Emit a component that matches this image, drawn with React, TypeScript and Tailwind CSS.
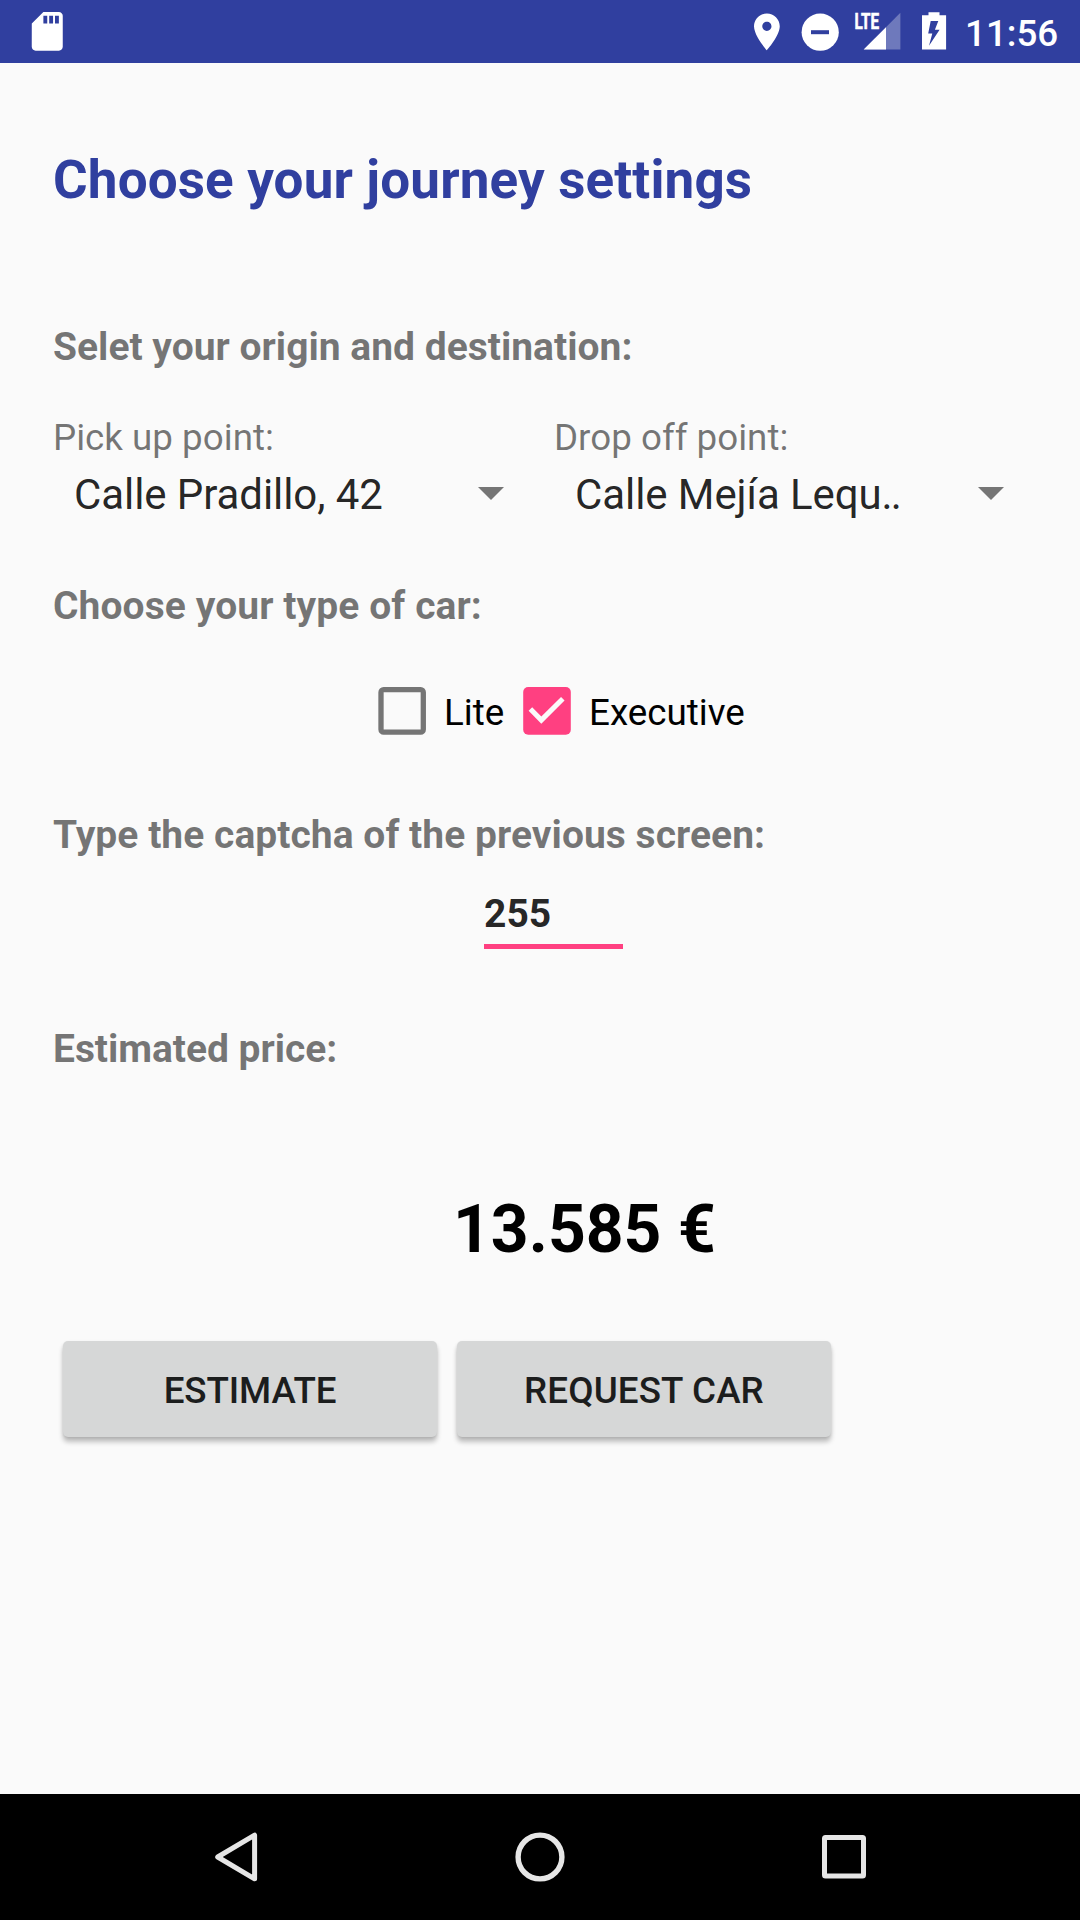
import React from "react";

function StatusBar() {
  return (
    <header className="flex h-[63px] items-start justify-between bg-[#303f9f] text-white">
      <svg className="ml-[24px] mt-[8px] size-[46.5px]" viewBox="0 0 24 24" fill="currentColor">
        <path d="M18 2h-8L4.02 8 4 20c0 1.1.9 2 2 2h12c1.1 0 2-.9 2-2V4c0-1.1-.9-2-2-2zm-6 6h-2V4h2v4zm3 0h-2V4h2v4zm3 0h-2V4h2v4z" />
      </svg>
      <div className="flex h-[63px] w-[336px]">
        <svg className="h-[63px] w-[45px]" viewBox="744 0 45 63" fill="currentColor">
          <path
            transform="translate(744.8 9.8) scale(1.84)"
            d="M12 2C8.13 2 5 5.13 5 9c0 5.25 7 13 7 13s7-7.75 7-13c0-3.87-3.13-7-7-7zm0 9.5c-1.38 0-2.5-1.12-2.5-2.5s1.12-2.5 2.5-2.5 2.5 1.12 2.5 2.5-1.12 2.5-2.5 2.5z"
          />
        </svg>
        <svg className="h-[63px] w-[61px]" viewBox="789 0 61 63">
          <circle cx="820.2" cy="32.2" r="18.6" fill="#fff" />
          <path d="M811 30.2h18v4h-18z" fill="#303f9f" />
        </svg>
        <svg className="h-[63px] w-[60px]" viewBox="850 0 60 63" fill="currentColor">
          <path d="M900.4 12.8V49.5H863.7z" opacity=".3" />
          <path d="M886 27.2V49.5H863.7z" />
          <text
            x="854.4"
            y="29.2"
            textLength="24.6"
            lengthAdjust="spacingAndGlyphs"
            fontFamily="Roboto"
            fontWeight="700"
            fontSize="22"
            stroke="currentColor"
            strokeWidth=".6"
          >
            LTE
          </text>
        </svg>
        <svg className="h-[63px] w-[54px]" viewBox="910 0 54 63" fill="currentColor">
          <path
            fillRule="evenodd"
            d="M928.5 12.2h11V15.2h6.6V49.6H922V15.2h6.5zM930.7 21L928.2 33.6H932.3L929 45.8L939.6 29.8H934.9L938.3 21z"
          />
        </svg>
        <span className="ml-[1px] mt-[12px] text-[36.75px] font-medium leading-[43px]">11:56</span>
      </div>
    </header>
  );
}

function Label({ className, children }: { className: string; children: React.ReactNode }) {
  return <h2 className={`text-[39px] font-bold leading-[46px] text-black/54 ${className}`}>{children}</h2>;
}

function Spinner({ label, className, children }: { label: string; className: string; children: React.ReactNode }) {
  return (
    <div className={`flex flex-col ${className}`}>
      <span className="text-[36.75px] leading-[43px] text-black/54">{label}</span>
      <button className="mt-[11px] flex h-[50px] items-center justify-between pl-[21px] pr-[50px] text-left">
        <span className="text-[42px] leading-[50px] tracking-[-0.08px] text-black/87">{children}</span>
        <svg className="mt-[-3px] h-[13px] w-[26px]" viewBox="0 0 26 13">
          <path d="M0 0h26L13 13z" fill="#757575" />
        </svg>
      </button>
    </div>
  );
}

function CheckOption({ label, checked, className }: { label: string; checked?: boolean; className: string }) {
  return (
    <div role="checkbox" aria-checked={!!checked} className={`flex items-center ${className}`}>
      <svg className="size-[48px]" viewBox="0 0 48 48">
        {checked ? (
          <>
            <rect x=".2" y="0" width="47.6" height="47.8" rx="5" fill="#ff4081" />
            <path d="M7.4 22.1L18.3 33.1L39.8 11.7" fill="none" stroke="#fafafa" strokeWidth="5" />
          </>
        ) : (
          <rect x="3" y="2.7" width="42.3" height="42.4" rx="2.6" fill="none" stroke="#757575" strokeWidth="5.3" />
        )}
      </svg>
      <span className="ml-[18px] mt-[3px] text-[36.75px] leading-[43px] text-black">{label}</span>
    </div>
  );
}

function RaisedButton({ className, children }: { className: string; children: React.ReactNode }) {
  return (
    <button
      className={`h-[96px] w-[374px] rounded-[5px] bg-[#d6d7d7] pt-[3px] text-[36.75px] font-medium leading-[43px] text-[#1c1d1d] shadow-[0_5px_5px_rgba(0,0,0,0.24),0_1px_3px_rgba(0,0,0,0.1)] ${className}`}
    >
      {children}
    </button>
  );
}

function NavBar() {
  return (
    <nav className="flex h-[126px] items-center justify-between bg-black pl-[212px] pr-[211px]">
      <svg className="mt-[-1px] h-[52px] w-[48px]" viewBox="0 0 48 52" fill="none" stroke="#e6e6e6" strokeWidth="5" strokeLinejoin="round">
        <path d="M42.6 4.2V47.8L5.7 26z" />
      </svg>
      <svg className="mt-[-1px] size-[52px]" viewBox="0 0 52 52" fill="none" stroke="#e6e6e6" strokeWidth="5.4">
        <circle cx="26" cy="26" r="21.9" />
      </svg>
      <svg className="size-[50px]" viewBox="0 0 50 50" fill="none" stroke="#e6e6e6" strokeWidth="5">
        <rect x="5.5" y="5.5" width="39" height="38.5" rx="1" />
      </svg>
    </nav>
  );
}

export default function App() {
  return (
    <div className="flex h-[1920px] w-[1080px] flex-col overflow-hidden bg-[#fafafa] font-['Roboto',sans-serif]">
      <StatusBar />
      <main className="flex flex-1 flex-col items-start pl-[53px]">
        <h1 className="mt-[86px] text-[53px] font-bold leading-[62px] tracking-[0.14px] text-[#303f9f]">
          Choose your journey settings
        </h1>
        <Label className="mt-[113px]">Selet your origin and destination:</Label>
        <div className="mt-[46px] flex">
          <Spinner label="Pick up point:" className="w-[501px]">
            Calle Pradillo, 42
          </Spinner>
          <Spinner label="Drop off point:" className="w-[500px]">
            Calle Mejía Lequ<span className="tracking-[-2px]">..</span>
          </Spinner>
        </div>
        <Label className="mt-[63px] tracking-[0.08px]">Choose your type of car:</Label>
        <div className="ml-[325px] mt-[58px] flex h-[48px]">
          <CheckOption label="Lite" className="w-[145px]" />
          <CheckOption label="Executive" checked className="w-[240px]" />
        </div>
        <Label className="mt-[77px] tracking-[0.03px]">Type the captcha of the previous screen:</Label>
        <div className="ml-[431px] mt-[33px] h-[58px] w-[139px] border-b-5 border-[#ff4081] text-[39px] font-bold leading-[46px] text-black/87">
          255
        </div>
        <Label className="mt-[77px] tracking-[-0.05px]">Estimated price:</Label>
        <p className="ml-[400px] mt-[119px] text-[66px] font-bold leading-[77px] text-black">13.585 €</p>
        <div className="ml-[10px] mt-[73px] flex gap-[20px]">
          <RaisedButton className="tracking-[-0.1px]">ESTIMATE</RaisedButton>
          <RaisedButton className="tracking-[0.12px]">REQUEST CAR</RaisedButton>
        </div>
      </main>
      <NavBar />
    </div>
  );
}
